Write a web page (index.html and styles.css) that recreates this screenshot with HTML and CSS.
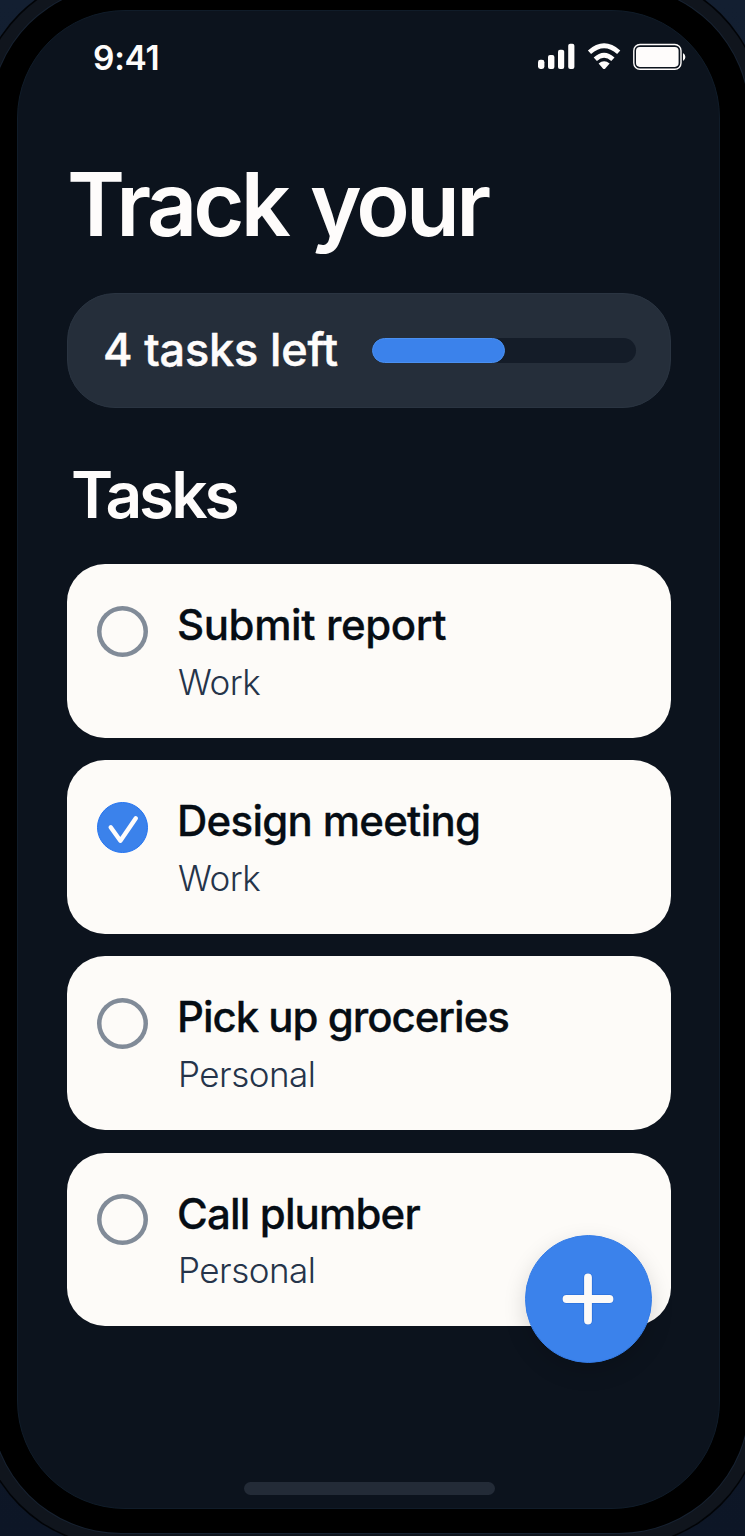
FILE: index.html
```html
<!DOCTYPE html>
<html lang="en">
<head>
<meta charset="utf-8">
<title>Track your tasks</title>
<link rel="stylesheet" href="styles.css">
</head>
<body>
<div class="device">
  <div class="screen">
    <header class="status">
      <span class="time">9:41</span>
      <svg class="status-icons" width="150" height="32" viewBox="0 0 150 32" fill="#fefcfb">
        <rect x="0" y="18.8" width="6.4" height="9.2" rx="2.4"/>
        <rect x="10" y="14" width="6.4" height="14" rx="2"/>
        <rect x="20" y="8.7" width="6.2" height="19.3" rx="2"/>
        <rect x="30.2" y="2.8" width="6.2" height="25.2" rx="2"/>
        <g fill="none" stroke="#fefcfb" stroke-width="4.8">
          <path d="M51.5 11.2Q66.1-1.6 80.7 11.2"/>
          <path d="M57.3 18.2Q66.1 10.2 74.9 18.2"/>
        </g>
        <path d="M60.6 22.4Q66.1 18 71.6 22.4L67.3 27.4Q66.1 28.7 64.9 27.4Z"/>
        <rect x="95.8" y="3.5" width="47.2" height="24.8" rx="6.2" fill="none" stroke="#fefcfb" stroke-width="1.4"/>
        <rect x="98" y="5.9" width="42.6" height="20" rx="3.8"/>
        <path d="M145 12Q147.4 13.4 147.4 16T145 20Z"/>
      </svg>
    </header>
    <main class="content">
      <h1 class="title">Track your</h1>
      <section class="summary">
        <span class="summary-text">4 tasks left</span>
        <div class="track"><div class="fill"></div></div>
      </section>
      <h2 class="subtitle">Tasks</h2>
      <div class="list">
        <article class="card">
          <span class="radio"></span>
          <div class="info"><h3 class="name name-report">Submit report</h3><p class="tag">Work</p></div>
        </article>
        <article class="card">
          <svg class="check" viewBox="0 0 51 51"><circle cx="25.5" cy="25.5" r="25" fill="#3b82eb" stroke="#2373f0"/><path d="M13.7 25.3L23.4 38.7L38.8 16.2" fill="none" stroke="#fefcfb" stroke-width="4.4" stroke-linecap="round" stroke-linejoin="round"/></svg>
          <div class="info"><h3 class="name name-meeting">Design meeting</h3><p class="tag">Work</p></div>
        </article>
        <article class="card">
          <span class="radio"></span>
          <div class="info"><h3 class="name name-groceries">Pick up groceries</h3><p class="tag">Personal</p></div>
        </article>
        <article class="card">
          <span class="radio"></span>
          <div class="info"><h3 class="name name-plumber">Call plumber</h3><p class="tag">Personal</p></div>
        </article>
        <button class="fab" aria-label="Add task"><svg width="52" height="52" viewBox="0 0 52 52"><path d="M26 4.5V47.5M4.5 26H47.5" stroke="#2d72dc" stroke-width="9.5" stroke-linecap="round"/><path d="M26 4.5V47.5M4.5 26H47.5" stroke="#fcfaf8" stroke-width="7.8" stroke-linecap="round"/></svg></button>
      </div>
    </main>
    <div class="home"></div>
  </div>
</div>
</body>
</html>
```
FILE: styles.css
```css
* { box-sizing: border-box; }
html { height: 100%; overflow: hidden; }
body {
  margin: 0;
  height: 1536px;
  overflow: hidden;
  background: linear-gradient(#131f31, #0d1626);
  font-family: Inter, "Liberation Sans", sans-serif;
  color: #fefcfb;
}
h1, h2, h3, p { margin: 0; }
.device {
  width: 758px;
  height: 1547px;
  margin: -14px 0 0 -9px;
  padding: 24px 29px 24px 26px;
  border-radius: 130px;
  background: #000;
  box-shadow: 0 0 0 1px #172231, 0 0 0 13px #10151d, 0 0 0 14.5px #020407;
}
.screen {
  display: flex;
  flex-direction: column;
  height: 1499px;
  border: 1px solid #101c29;
  border-radius: 108px;
  background: #0c131d;
}
.status {
  display: flex;
  justify-content: space-between;
  align-items: center;
  height: 32px;
  margin: 30px 31px 0 75px;
}
.time {
  padding-top: 1px;
  font-size: 33.5px;
  line-height: 32px;
  font-weight: 600;
  letter-spacing: -0.3px;
}
.content { padding: 87px 48px 0 49px; }
.title {
  font-size: 88px;
  line-height: 88px;
  font-weight: 600;
  letter-spacing: -3.8px;
  word-spacing: 4.5px;
}
.summary {
  display: flex;
  align-items: center;
  justify-content: space-between;
  height: 115px;
  margin-top: 45px;
  padding: 0 34px 0 35px;
  border: 1px solid #2a3441;
  border-radius: 48px;
  background: #252e3a;
}
.summary-text {
  padding-bottom: 2px;
  font-size: 45px;
  line-height: 52px;
  font-weight: 500;
  letter-spacing: -0.15px;
  -webkit-text-stroke: 0.5px currentColor;
  white-space: nowrap;
}
.track {
  flex: none;
  width: 264px;
  height: 25px;
  border-radius: 13px;
  background: #141c28;
}
.fill {
  width: 50.3%;
  height: 100%;
  border: 1px solid #4a90f0;
  border-radius: 13px;
  background: #3b82eb;
}
.subtitle {
  margin: 55px 0 0 4px;
  font-size: 64px;
  line-height: 64px;
  font-weight: 600;
  letter-spacing: -3.1px;
}
.list {
  position: relative;
  display: grid;
  gap: 22.7px;
  margin-top: 37px;
}
.card {
  display: flex;
  gap: 30px;
  height: 173.5px;
  padding: 40px 30px 0;
  border-radius: 38px;
  background: #fdfbf8;
}
.radio, .check {
  flex: none;
  width: 51px;
  height: 51px;
  margin-top: 1.5px;
}
.radio {
  border-radius: 50%;
  box-shadow: inset 0 0 0 4.5px #818b98;
}
.info { margin-left: -1px; }
.name {
  color: #060d14;
  font-size: 42px;
  line-height: 42px;
  font-weight: 500;
  -webkit-text-stroke: 0.3px currentColor;
  white-space: nowrap;
}
.name-report { letter-spacing: -0.4px; }
.name-meeting { letter-spacing: -0.72px; }
.name-groceries { letter-spacing: -1.02px; }
.name-plumber { letter-spacing: -0.85px; }
.tag {
  margin: 18.5px 0 0 1px;
  color: #25344a;
  font-size: 35px;
  line-height: 35px;
  font-weight: 300;
  letter-spacing: -0.5px;
}
.fab {
  position: absolute;
  right: 19px;
  bottom: -36.5px;
  display: grid;
  place-items: center;
  width: 127.5px;
  height: 127.5px;
  padding: 0;
  border: 1px solid #357de8;
  border-radius: 50%;
  background: #3b82eb;
  box-shadow: 0 8px 22px rgba(0, 0, 0, 0.15);
}
.home {
  width: 251px;
  height: 13px;
  margin: auto auto 13px 226px;
  border-radius: 7px;
  background: #232b37;
}
```
